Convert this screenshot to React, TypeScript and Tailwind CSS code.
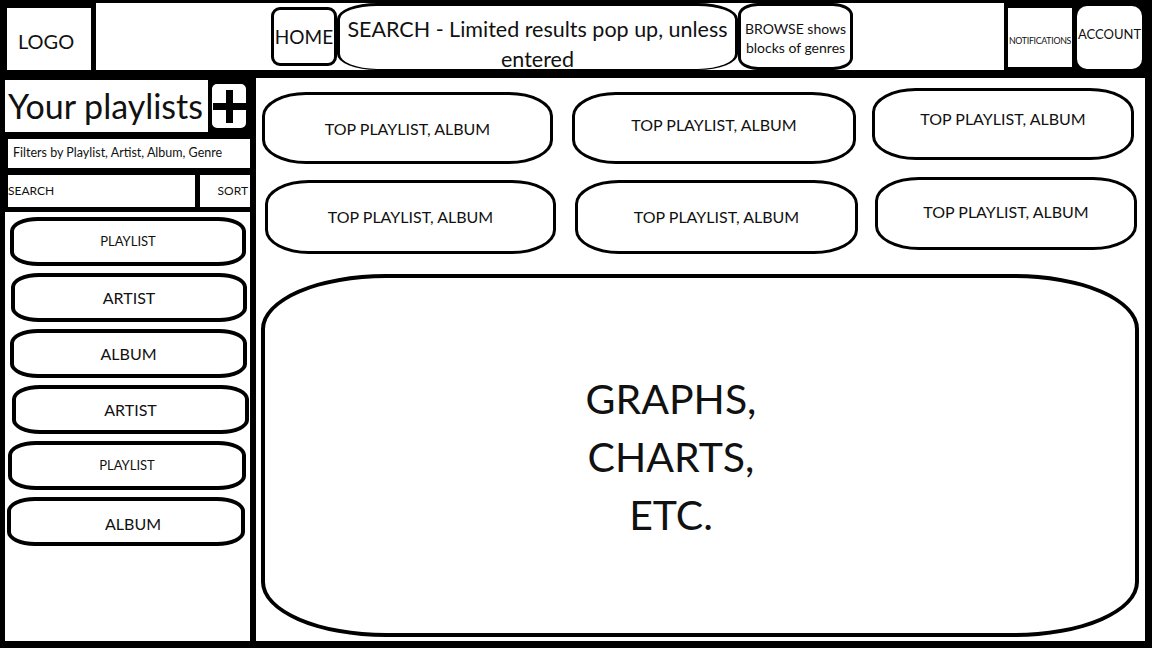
import React from "react";

const sideItems = [
  { label: "PLAYLIST", text: "text-[13px]", pos: "ml-[5px] w-[236px]" },
  { label: "ARTIST", text: "text-[16px]", pos: "ml-[6px] w-[236px]" },
  { label: "ALBUM", text: "text-[16px]", pos: "ml-[5px] w-[237px]" },
  { label: "ARTIST", text: "text-[16px]", pos: "ml-[7px] w-[237px]" },
  { label: "PLAYLIST", text: "text-[13px]", pos: "ml-[3px] w-[238px]" },
  { label: "ALBUM", text: "text-[16px] pl-[14px] pt-[4px]", pos: "ml-[2px] w-[238px]" },
];

const TopCard = ({ className }: { className: string }) => (
  <div
    className={`flex items-center justify-center bg-white border-[3px] border-black rounded-[44px_/_24px] text-[16px] ${className}`}
  >
    TOP PLAYLIST, ALBUM
  </div>
);

const PlusIcon = () => (
  <svg width="33" height="33" viewBox="0 0 33 33">
    <rect x="13" y="0" width="7" height="33" fill="#000" />
    <rect x="0" y="13" width="33" height="7" fill="#000" />
  </svg>
);

export default function App() {
  return (
    <div className="w-[1152px] h-[648px] bg-black flex flex-col pt-[3px] pb-[7px] pl-[5px] pr-[7px] font-['Lato',sans-serif] text-[#111] overflow-hidden">
      {/* Top navigation */}
      <div className="flex h-[67px] shrink-0">
        <div className="ml-[2px] mt-[5px] w-[84px] bg-white flex items-center pl-[11px] pt-[4px] text-[20px]">
          LOGO
        </div>
        <div className="ml-[5px] w-[908px] bg-white flex items-stretch">
          <div className="w-[175px]" />
          <div className="mt-[4px] mb-[4px] w-[66px] border-[3px] border-black rounded-[9px] flex items-center justify-center pt-[2px] text-[19px]">
            HOME
          </div>
          <div className="w-[401px] border-[3px] border-b-[1px] border-black rounded-[40px_/_16px] flex flex-col items-center justify-center pt-[13px] text-[21.5px] leading-[30px] text-center whitespace-nowrap">
            <span>SEARCH - Limited results pop up, unless</span>
            <span>entered</span>
          </div>
          <div className="w-[115px] border-[3px] border-black rounded-[20px_/_12px] flex flex-col items-center justify-center pt-[2px] text-[14px] leading-[19px] text-center">
            <span>BROWSE shows</span>
            <span>blocks of genres</span>
          </div>
          <div className="flex-1" />
        </div>
        <div className="ml-[4px] mt-[5px] mb-[3px] w-[64px] bg-white flex items-center justify-center pt-[6px] text-[8.8px] tracking-[-0.3px] whitespace-nowrap overflow-visible">
          NOTIFICATIONS
        </div>
        <div className="ml-[5px] mt-[3px] mb-[1px] w-[65px] bg-white rounded-[10px] flex items-start justify-center pt-[19px] text-[13px]">
          ACCOUNT
        </div>
      </div>

      {/* Body */}
      <div className="flex flex-1 mt-[8px] min-h-0">
        {/* Sidebar */}
        <div className="w-[245px] flex flex-col">
          <div className="flex h-[52px] mt-[2px]">
            <div className="w-[203px] bg-white flex items-center pl-[3px] text-[34px] leading-none whitespace-nowrap">
              Your playlists
            </div>
            <div className="w-[42px] bg-white border-[4px] border-black rounded-[9px] flex items-center justify-center">
              <PlusIcon />
            </div>
          </div>
          <div className="mt-[7px] ml-[3px] h-[29px] bg-white flex items-center pl-[5px] text-[12.5px]">
            Filters by Playlist, Artist, Album, Genre
          </div>
          <div className="mt-[7px] h-[32px] flex">
            <div className="ml-[3px] w-[187px] bg-white flex items-center text-[12px]">SEARCH</div>
            <div className="ml-[5px] flex-1 bg-white flex items-center justify-end pr-[2px] text-[12px]">SORT</div>
          </div>
          <div className="mt-[5px] flex-1 bg-white flex flex-col gap-[7px] pt-[5px]">
            {sideItems.map((item, i) => (
              <div
                key={i}
                className={`h-[49px] border-[4px] border-black rounded-[28px_/_14px] flex items-center justify-center ${item.pos} ${item.text}`}
              >
                {item.label}
              </div>
            ))}
          </div>
        </div>

        {/* Main */}
        <div className="ml-[6px] flex-1 bg-white flex flex-col">
          <div className="flex items-start pl-[6px]">
            <TopCard className="mt-[14px] w-[291px] h-[72px] pt-[2px]" />
            <TopCard className="mt-[14px] ml-[19px] w-[284px] h-[72px] pb-[6px]" />
            <TopCard className="mt-[10px] ml-[16px] w-[262px] h-[72px] pb-[10px]" />
          </div>
          <div className="flex items-start pl-[9px]">
            <TopCard className="mt-[16px] w-[291px] h-[74px]" />
            <TopCard className="mt-[16px] ml-[19px] w-[283px] h-[74px]" />
            <TopCard className="mt-[13px] ml-[17px] w-[262px] h-[73px] pb-[3px]" />
          </div>
          <div className="mt-[20px] mb-[4px] ml-[5px] w-[878px] flex-1 border-[4px] border-black rounded-[125px_/_55px] flex items-center justify-center">
            <div className="mr-[58px] pt-[2px] text-[41px] leading-[58px] text-center">
              <div>GRAPHS,</div>
              <div>CHARTS,</div>
              <div>ETC.</div>
            </div>
          </div>
        </div>
      </div>
    </div>
  );
}
